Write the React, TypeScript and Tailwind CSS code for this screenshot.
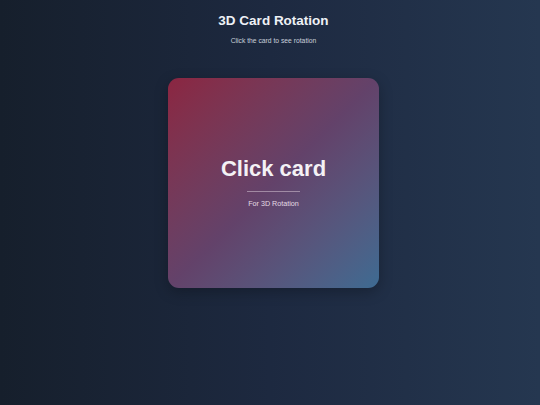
import React from "react";

export default function App() {
  return (
    <div
      className="w-[540px] h-[405px] pl-[7px] bg-gradient-to-r from-[#161f2c] via-[#1d2940] to-[#253750] flex flex-col items-center"
      style={{ fontFamily: '"Liberation Sans", Arial, sans-serif' }}
    >
      <h1 className="mt-[12px] text-[13.5px] leading-[18px] font-bold text-[#eef1f6]">3D Card Rotation</h1>
      <p className="mt-[7px] text-[6.75px] leading-[8px] text-[#c9d0db]">Click the card to see rotation</p>
      <div className="mt-[33px] w-[211px] h-[210px] rounded-[11px] bg-gradient-to-br from-[#8b2541] via-[#63426a] to-[#3d6b92] shadow-[0_4px_14px_rgba(0,0,0,0.25)] flex flex-col items-center justify-center">
        <div className="mt-[-2px] text-[22px] leading-[26px] font-bold text-[#f4f1f5]">Click card</div>
        <div className="mt-[9.5px] w-[53px] h-px bg-[#c9b9c9]/60" />
        <div className="mt-[7px] text-[7.2px] leading-[9px] text-[#e3dbe4]">For 3D Rotation</div>
      </div>
    </div>
  );
}
